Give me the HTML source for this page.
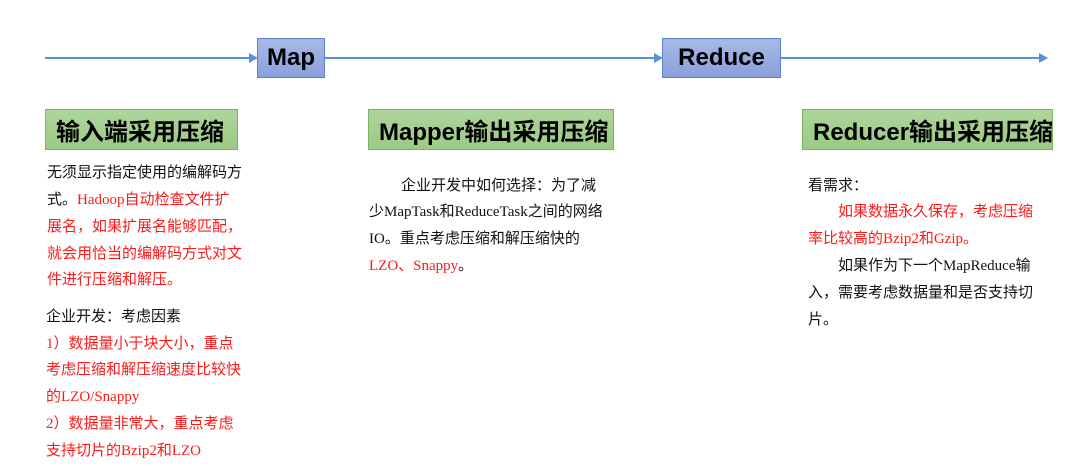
<!DOCTYPE html>
<html><head><meta charset="utf-8"><style>
body{margin:0;width:1065px;height:471px;background:#fff;position:relative;overflow:hidden;font-family:"Liberation Serif","Noto Sans CJK SC",serif;}
.l{position:absolute;font-size:15px;line-height:16px;white-space:nowrap;color:#111;}
.r{color:#ff1a1a}
.box{position:absolute;box-sizing:border-box;font-family:"Liberation Sans","Noto Sans CJK SC",sans-serif;font-weight:bold;color:#000;display:flex;align-items:center;overflow:hidden;white-space:nowrap;}
.blue{background:linear-gradient(#a9b9e6,#8aa0dc);border:1.5px solid #5b82cc;font-size:24px;justify-content:center;}
.green{background:linear-gradient(#aed59b,#9bca85);border:1.5px solid #7cb45f;font-size:24px;padding-left:10px;}
</style></head><body>
<svg width="1065" height="100" style="position:absolute;left:0;top:0">
<line x1="45" y1="58" x2="250" y2="58" stroke="#5b8fd6" stroke-width="2"/>
<polygon points="249,53 258,58 249,63" fill="#5b8fd6"/>
<line x1="324" y1="58" x2="655" y2="58" stroke="#5b8fd6" stroke-width="2"/>
<polygon points="654,53 663,58 654,63" fill="#5b8fd6"/>
<line x1="780" y1="58" x2="1040" y2="58" stroke="#5b8fd6" stroke-width="2"/>
<polygon points="1039,53 1048,58 1039,63" fill="#5b8fd6"/>
</svg>
<div class="box blue" style="left:257px;top:38px;width:68px;height:40px">Map</div>
<div class="box blue" style="left:662px;top:38px;width:119px;height:40px">Reduce</div>
<div class="box green" style="left:45px;top:109px;width:193px;height:41px">输入端采用压缩</div>
<div class="box green" style="left:368px;top:109px;width:246px;height:41px">Mapper输出采用压缩</div>
<div class="box green" style="left:802px;top:109px;width:251px;height:41px">Reducer输出采用压缩</div>

<div class="l" style="left:47px;top:165px">无须显示指定使用的编解码方</div>
<div class="l" style="left:47px;top:192px">式。<span class="r">Hadoop自动检查文件扩</span></div>
<div class="l r" style="left:47px;top:219px">展名，如果扩展名能够匹配，</div>
<div class="l r" style="left:47px;top:246px">就会用恰当的编解码方式对文</div>
<div class="l r" style="left:47px;top:272px">件进行压缩和解压。</div>
<div class="l" style="left:46px;top:309px">企业开发：考虑因素</div>
<div class="l r" style="left:46px;top:336px">1）数据量小于块大小，重点</div>
<div class="l r" style="left:46px;top:362px">考虑压缩和解压缩速度比较快</div>
<div class="l r" style="left:46px;top:389px">的LZO/Snappy</div>
<div class="l r" style="left:46px;top:416px">2）数据量非常大，重点考虑</div>
<div class="l r" style="left:46px;top:443px">支持切片的Bzip2和LZO</div>

<div class="l" style="left:401px;top:178px">企业开发中如何选择：为了减</div>
<div class="l" style="left:369px;top:204px">少MapTask和ReduceTask之间的网络</div>
<div class="l" style="left:369px;top:231px">IO。重点考虑压缩和解压缩快的</div>
<div class="l" style="left:369px;top:258px"><span class="r">LZO、Snappy</span>。</div>

<div class="l" style="left:808px;top:178px">看需求：</div>
<div class="l r" style="left:838px;top:204px">如果数据永久保存，考虑压缩</div>
<div class="l r" style="left:808px;top:231px">率比较高的Bzip2和Gzip。</div>
<div class="l" style="left:838px;top:258px">如果作为下一个MapReduce输</div>
<div class="l" style="left:808px;top:285px">入，需要考虑数据量和是否支持切</div>
<div class="l" style="left:808px;top:312px">片。</div>
</body></html>
